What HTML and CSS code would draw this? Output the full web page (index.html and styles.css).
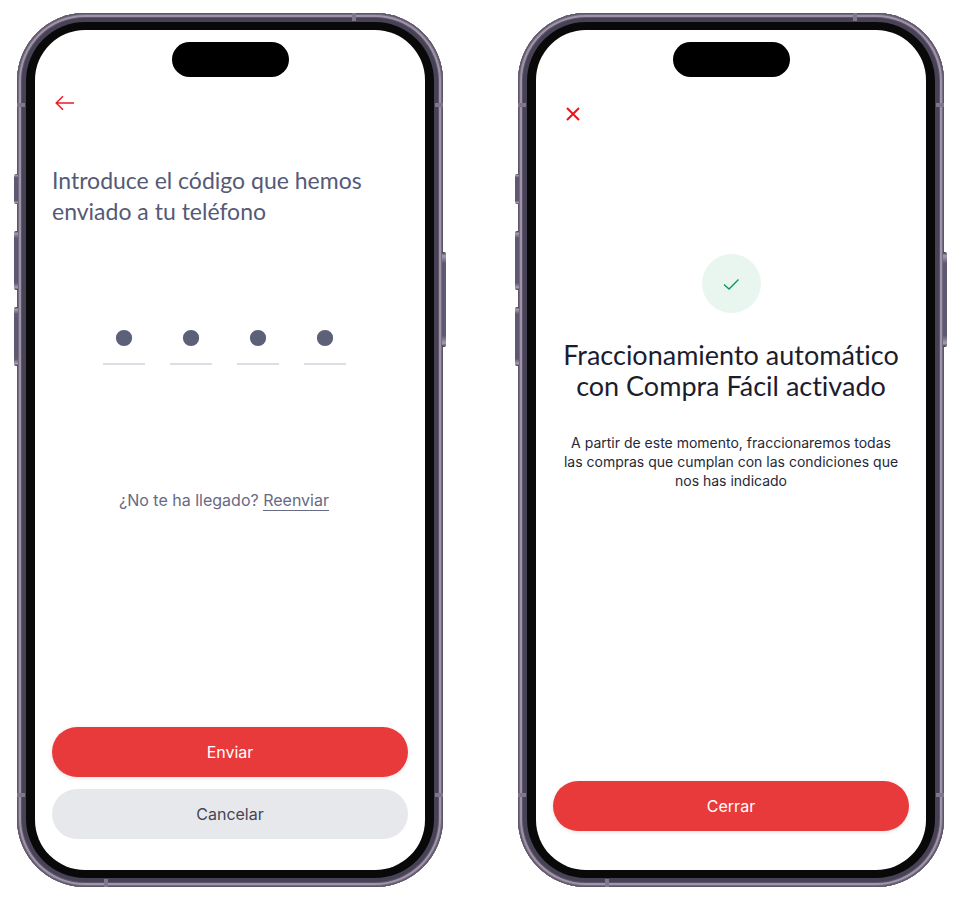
FILE: index.html
```html
<!DOCTYPE html>
<html lang="es">
<head>
<meta charset="utf-8">
<meta name="viewport" content="width=device-width, initial-scale=1">
<title>Compra Fácil</title>
<link rel="stylesheet" href="styles.css">
</head>
<body>
<main class="phones">
  <section class="phone">
    <span class="key key-action"></span>
    <span class="key key-up"></span>
    <span class="key key-down"></span>
    <span class="key key-power"></span>
    <span class="band band-left band-high"></span>
    <span class="band band-right band-high"></span>
    <span class="band band-left band-low"></span>
    <span class="band band-right band-low"></span>
    <span class="band band-top"></span>
    <span class="band band-bottom"></span>
    <form class="screen screen-code">
      <div class="island"></div>
      <button class="icon-button back" type="button" aria-label="Volver">
        <svg width="20" height="16" viewBox="0 0 20 16" fill="none" stroke="#ec1c24" stroke-width="1.5"><path d="M19 8H1.5M8 1.2 1.2 8 8 14.8"/></svg>
      </button>
      <h1 class="title">Introduce el código que hemos enviado a tu teléfono</h1>
      <div class="pin">
        <input type="password" maxlength="1" value="1" aria-label="Dígito 1">
        <input type="password" maxlength="1" value="2" aria-label="Dígito 2">
        <input type="password" maxlength="1" value="3" aria-label="Dígito 3">
        <input type="password" maxlength="1" value="4" aria-label="Dígito 4">
      </div>
      <p class="resend">¿No te ha llegado? <a href="#">Reenviar</a></p>
      <div class="actions">
        <button class="button primary" type="button">Enviar</button>
        <button class="button secondary" type="button">Cancelar</button>
      </div>
    </form>
  </section>

  <section class="phone">
    <span class="key key-action"></span>
    <span class="key key-up"></span>
    <span class="key key-down"></span>
    <span class="key key-power"></span>
    <span class="band band-left band-high"></span>
    <span class="band band-right band-high"></span>
    <span class="band band-left band-low"></span>
    <span class="band band-right band-low"></span>
    <span class="band band-top"></span>
    <span class="band band-bottom"></span>
    <div class="screen screen-done">
      <div class="island"></div>
      <button class="icon-button close" type="button" aria-label="Cerrar">
        <svg width="14" height="14" viewBox="0 0 14 14" fill="none" stroke="#e8141c" stroke-width="2"><path d="M1 1l12 12M13 1 1 13"/></svg>
      </button>
      <div class="badge">
        <svg width="18" height="14" viewBox="0 0 18 14" fill="none" stroke="#0a9a5b" stroke-width="1.4"><path d="M2 7.5 7 12 16.5 2.5"/></svg>
      </div>
      <h1 class="headline">Fraccionamiento automático con Compra Fácil activado</h1>
      <p class="message">A partir de este momento, fraccionaremos todas las compras que cumplan con las condiciones que nos has indicado</p>
      <div class="actions">
        <button class="button primary" type="button">Cerrar</button>
      </div>
    </div>
  </section>
</main>
</body>
</html>
```
FILE: styles.css
```css
* {
  box-sizing: border-box;
}

body {
  margin: 0;
  background: #fff;
  font-family: Inter, "Liberation Sans", sans-serif;
}

.phones {
  display: grid;
  grid-template-columns: 1fr 1fr;
  gap: 75px;
  min-height: 100vh;
  padding: 13px 17px;
}

/* Device frame: concentric metal rings round a black bezel */
.phone {
  position: relative;
  display: flex;
  padding: 17px 18px;
  border-radius: 68px;
  background: #090909;
  box-shadow:
    inset 0 0 0 1px #5c5467,
    inset 0 0 0 2px #756b80,
    inset 0 0 0 4px #a095a8,
    inset 0 0 0 5px #5c5468,
    inset 0 0 0 9px #474255;
}

.key {
  position: absolute;
  left: -3px;
  width: 4px;
  height: 59px;
  border-radius: 2px 0 0 2px;
  background: linear-gradient(#3c374a, #a79db0 4%, #5f5871 12%, #5f5871 88%, #a79db0 96%, #3c374a);
}

.key-action {
  top: 161px;
  height: 30px;
}

.key-up {
  top: 218px;
}

.key-down {
  top: 294px;
}

.key-power {
  top: 239px;
  left: auto;
  right: -3px;
  height: 95px;
  border-radius: 0 2px 2px 0;
}

.band {
  position: absolute;
  width: 8px;
  height: 4px;
  background: #81778c;
}

.band-left {
  left: 0;
}

.band-right {
  right: 0;
}

.band-high {
  top: 90px;
}

.band-low {
  bottom: 90px;
}

.band-top,
.band-bottom {
  width: 4px;
  height: 8px;
}

.band-top {
  top: 0;
  right: 87px;
}

.band-bottom {
  bottom: 0;
  left: 87px;
}

.screen {
  display: flex;
  flex: 1;
  flex-direction: column;
  min-width: 0;
  padding: 12px 17px 31px;
  border-radius: 50px;
  background: #fff;
}

.screen-done {
  align-items: center;
  padding-bottom: 39px;
}

.island {
  align-self: center;
  width: 117px;
  height: 35px;
  border-radius: 18px;
  background: #000;
}

.icon-button {
  display: flex;
  align-self: flex-start;
  padding: 0;
  border: 0;
  background: none;
}

.back {
  margin: 18px 0 0 3px;
}

.close {
  margin: 30px 0 0 13px;
}

.title,
.headline {
  font-family: Lato, sans-serif;
  font-weight: 400;
  font-variant-ligatures: none;
  line-height: 31px;
}

.title {
  margin: 54px 0 0;
  padding-right: 24px;
  color: #555a76;
  font-size: 23px;
}

.pin {
  display: flex;
  justify-content: center;
  gap: 25px;
  margin-top: 85px;
  padding-right: 11px;
}

.pin input {
  width: 42px;
  height: 53px;
  padding: 3px 0 0;
  border: 0;
  border-bottom: 2px solid #dddde4;
  border-radius: 0;
  outline: 0;
  background: none;
  color: #5c6079;
  font: 56px/48px "DejaVu Sans", sans-serif;
  text-align: center;
}

.resend {
  margin: 124px 0 0;
  padding-right: 12px;
  color: #666a83;
  font-size: 16px;
  line-height: 22px;
  text-align: center;
}

.resend a {
  border-bottom: 1px solid #666a83;
  color: inherit;
  text-decoration: none;
}

.badge {
  display: grid;
  place-items: center;
  width: 59px;
  height: 59px;
  margin-top: 133px;
  border-radius: 50%;
  background: #e9f6f0;
}

.headline {
  margin: 26px 0 0;
  color: #1b1d2e;
  font-size: 27px;
  text-align: center;
}

.message {
  margin: 32px 0 0;
  padding: 0 8px;
  color: #262838;
  font-size: 14px;
  line-height: 19px;
  text-align: center;
}

.actions {
  display: flex;
  flex-direction: column;
  align-self: stretch;
  gap: 12px;
  margin-top: auto;
}

.button {
  height: 50px;
  border: 0;
  border-radius: 25px;
  font: 400 16px/22px Inter, "Liberation Sans", sans-serif;
}

.primary {
  background: #e83a3b;
  box-shadow: 0 1px 4px rgba(0, 0, 0, 0.12);
  color: #fff;
}

.secondary {
  background: #e7e8ec;
  color: #444654;
}
```
